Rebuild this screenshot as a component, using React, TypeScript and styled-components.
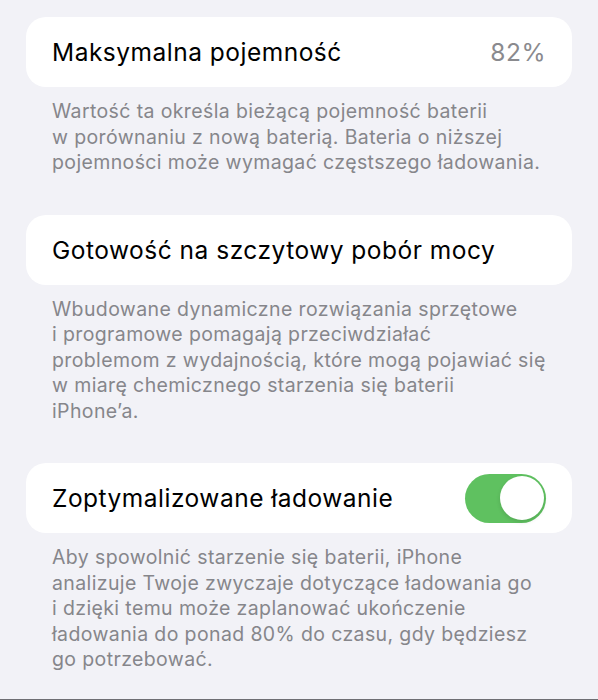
import styled, { createGlobalStyle } from "styled-components";

const GlobalStyle = createGlobalStyle`
  html, body {
    margin: 0;
    padding: 0;
    background: #f2f2f7;
  }
  body {
    font-family: Inter, "Noto Sans", "Liberation Sans", sans-serif;
    -webkit-font-smoothing: antialiased;
  }
`;

const Page = styled.div`
  width: 100%;
  height: 700px;
  box-sizing: border-box;
  padding: 17px 26px 0;
  display: flex;
  flex-direction: column;
  gap: 39px;
  overflow: hidden;
  border-bottom: 1px solid #6e6e73;
`;

const Section = styled.section`
  display: flex;
  flex-direction: column;
`;

const Cell = styled.div`
  height: 70px;
  box-sizing: border-box;
  padding: 0 26px;
  background: #ffffff;
  border-radius: 20px;
  display: flex;
  align-items: center;
  justify-content: space-between;
`;

const Label = styled.span`
  font-size: 24.5px;
  color: #000000;
  letter-spacing: 0.5px;
`;

const Value = styled.span`
  font-size: 24.5px;
  color: #8a8a8e;
  letter-spacing: 0.5px;
`;

const Footer = styled.p`
  margin: 0;
  padding: 12px 26px 0;
  font-size: 19.5px;
  line-height: 25.5px;
  letter-spacing: 0.38px;
  color: #86868b;
`;

const Line = styled.span`
  display: block;
  white-space: nowrap;
`;

const Switch = styled.div<{ $on: boolean }>`
  width: 81px;
  height: 49px;
  box-sizing: border-box;
  padding: 2.5px;
  border-radius: 25px;
  background: ${(p) => (p.$on ? "#5fc160" : "#e9e9eb")};
  display: flex;
  justify-content: ${(p) => (p.$on ? "flex-end" : "flex-start")};
`;

const Knob = styled.div`
  width: 44px;
  height: 44px;
  border-radius: 50%;
  background: #ffffff;
  box-shadow: 0 2px 4px rgba(0, 0, 0, 0.12);
`;

const sections = [
  {
    label: "Maksymalna pojemność",
    value: "82%",
    footer: [
      "Wartość ta określa bieżącą pojemność baterii",
      "w porównaniu z nową baterią. Bateria o niższej",
      "pojemności może wymagać częstszego ładowania.",
    ],
  },
  {
    label: "Gotowość na szczytowy pobór mocy",
    footer: [
      "Wbudowane dynamiczne rozwiązania sprzętowe",
      "i programowe pomagają przeciwdziałać",
      "problemom z wydajnością, które mogą pojawiać się",
      "w miarę chemicznego starzenia się baterii",
      "iPhone’a.",
    ],
  },
  {
    label: "Zoptymalizowane ładowanie",
    toggle: true,
    footer: [
      "Aby spowolnić starzenie się baterii, iPhone",
      "analizuje Twoje zwyczaje dotyczące ładowania go",
      "i dzięki temu może zaplanować ukończenie",
      "ładowania do ponad 80% do czasu, gdy będziesz",
      "go potrzebować.",
    ],
  },
];

const App = () => {
  return (
    <>
      <GlobalStyle />
      <Page>
        {sections.map((s) => (
          <Section key={s.label}>
            <Cell>
              <Label>{s.label}</Label>
              {s.value && <Value>{s.value}</Value>}
              {s.toggle && (
                <Switch $on>
                  <Knob />
                </Switch>
              )}
            </Cell>
            <Footer>
              {s.footer.map((line) => (
                <Line key={line}>{line}</Line>
              ))}
            </Footer>
          </Section>
        ))}
      </Page>
    </>
  );
};

export default App;
